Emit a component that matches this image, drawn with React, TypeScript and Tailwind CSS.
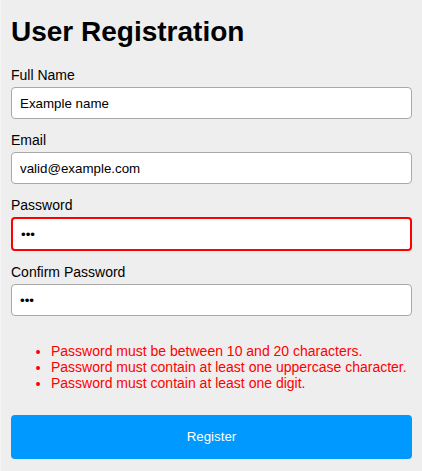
import { useState } from 'react';

type Field = {
  id: string;
  label: string;
  type: string;
  value: string;
  invalid?: boolean;
};

const fields: Field[] = [
  { id: 'fullName', label: 'Full Name', type: 'text', value: 'Example name' },
  { id: 'email', label: 'Email', type: 'email', value: 'valid@example.com' },
  { id: 'password', label: 'Password', type: 'password', value: 'abc', invalid: true },
  { id: 'confirmPassword', label: 'Confirm Password', type: 'password', value: 'abc' },
];

const errors = [
  'Password must be between 10 and 20 characters.',
  'Password must contain at least one uppercase character.',
  'Password must contain at least one digit.',
];

export default function App() {
  const [values, setValues] = useState<Record<string, string>>(
    Object.fromEntries(fields.map((f) => [f.id, f.value]))
  );

  return (
    <div className="h-[471px] bg-[#eeeeee] border-l border-[#f4f4f4] px-[10px] pt-4 font-['Liberation_Sans',Arial,sans-serif] text-black">
      <h1 className="text-[28px] font-bold leading-[32px]">User Registration</h1>

      <form className="mt-[19px] flex flex-col gap-[13px]" onSubmit={(e) => e.preventDefault()}>
        {fields.map((field) => (
          <div key={field.id} className="flex flex-col gap-1">
            <label htmlFor={field.id} className="text-sm leading-4">
              {field.label}
            </label>
            <input
              id={field.id}
              type={field.type}
              value={values[field.id]}
              onChange={(e) => setValues({ ...values, [field.id]: e.target.value })}
              className={
                field.invalid
                  ? 'h-[34px] w-full rounded border-2 border-[#ff0000] bg-white px-2 text-[13.33px] outline-none'
                  : 'h-8 w-full rounded border border-[#a9a9a9] bg-white px-2 text-[13.33px] outline-none'
              }
            />
          </div>
        ))}

        <ul className="mt-[14px] list-disc pl-10 text-sm leading-4 text-[#ff0000]">
          {errors.map((err) => (
            <li key={err}>{err}</li>
          ))}
        </ul>

        <button
          type="submit"
          className="mt-[11px] h-11 w-full rounded bg-[#0099ff] text-[13.33px] text-white"
        >
          Register
        </button>
      </form>
    </div>
  );
}
